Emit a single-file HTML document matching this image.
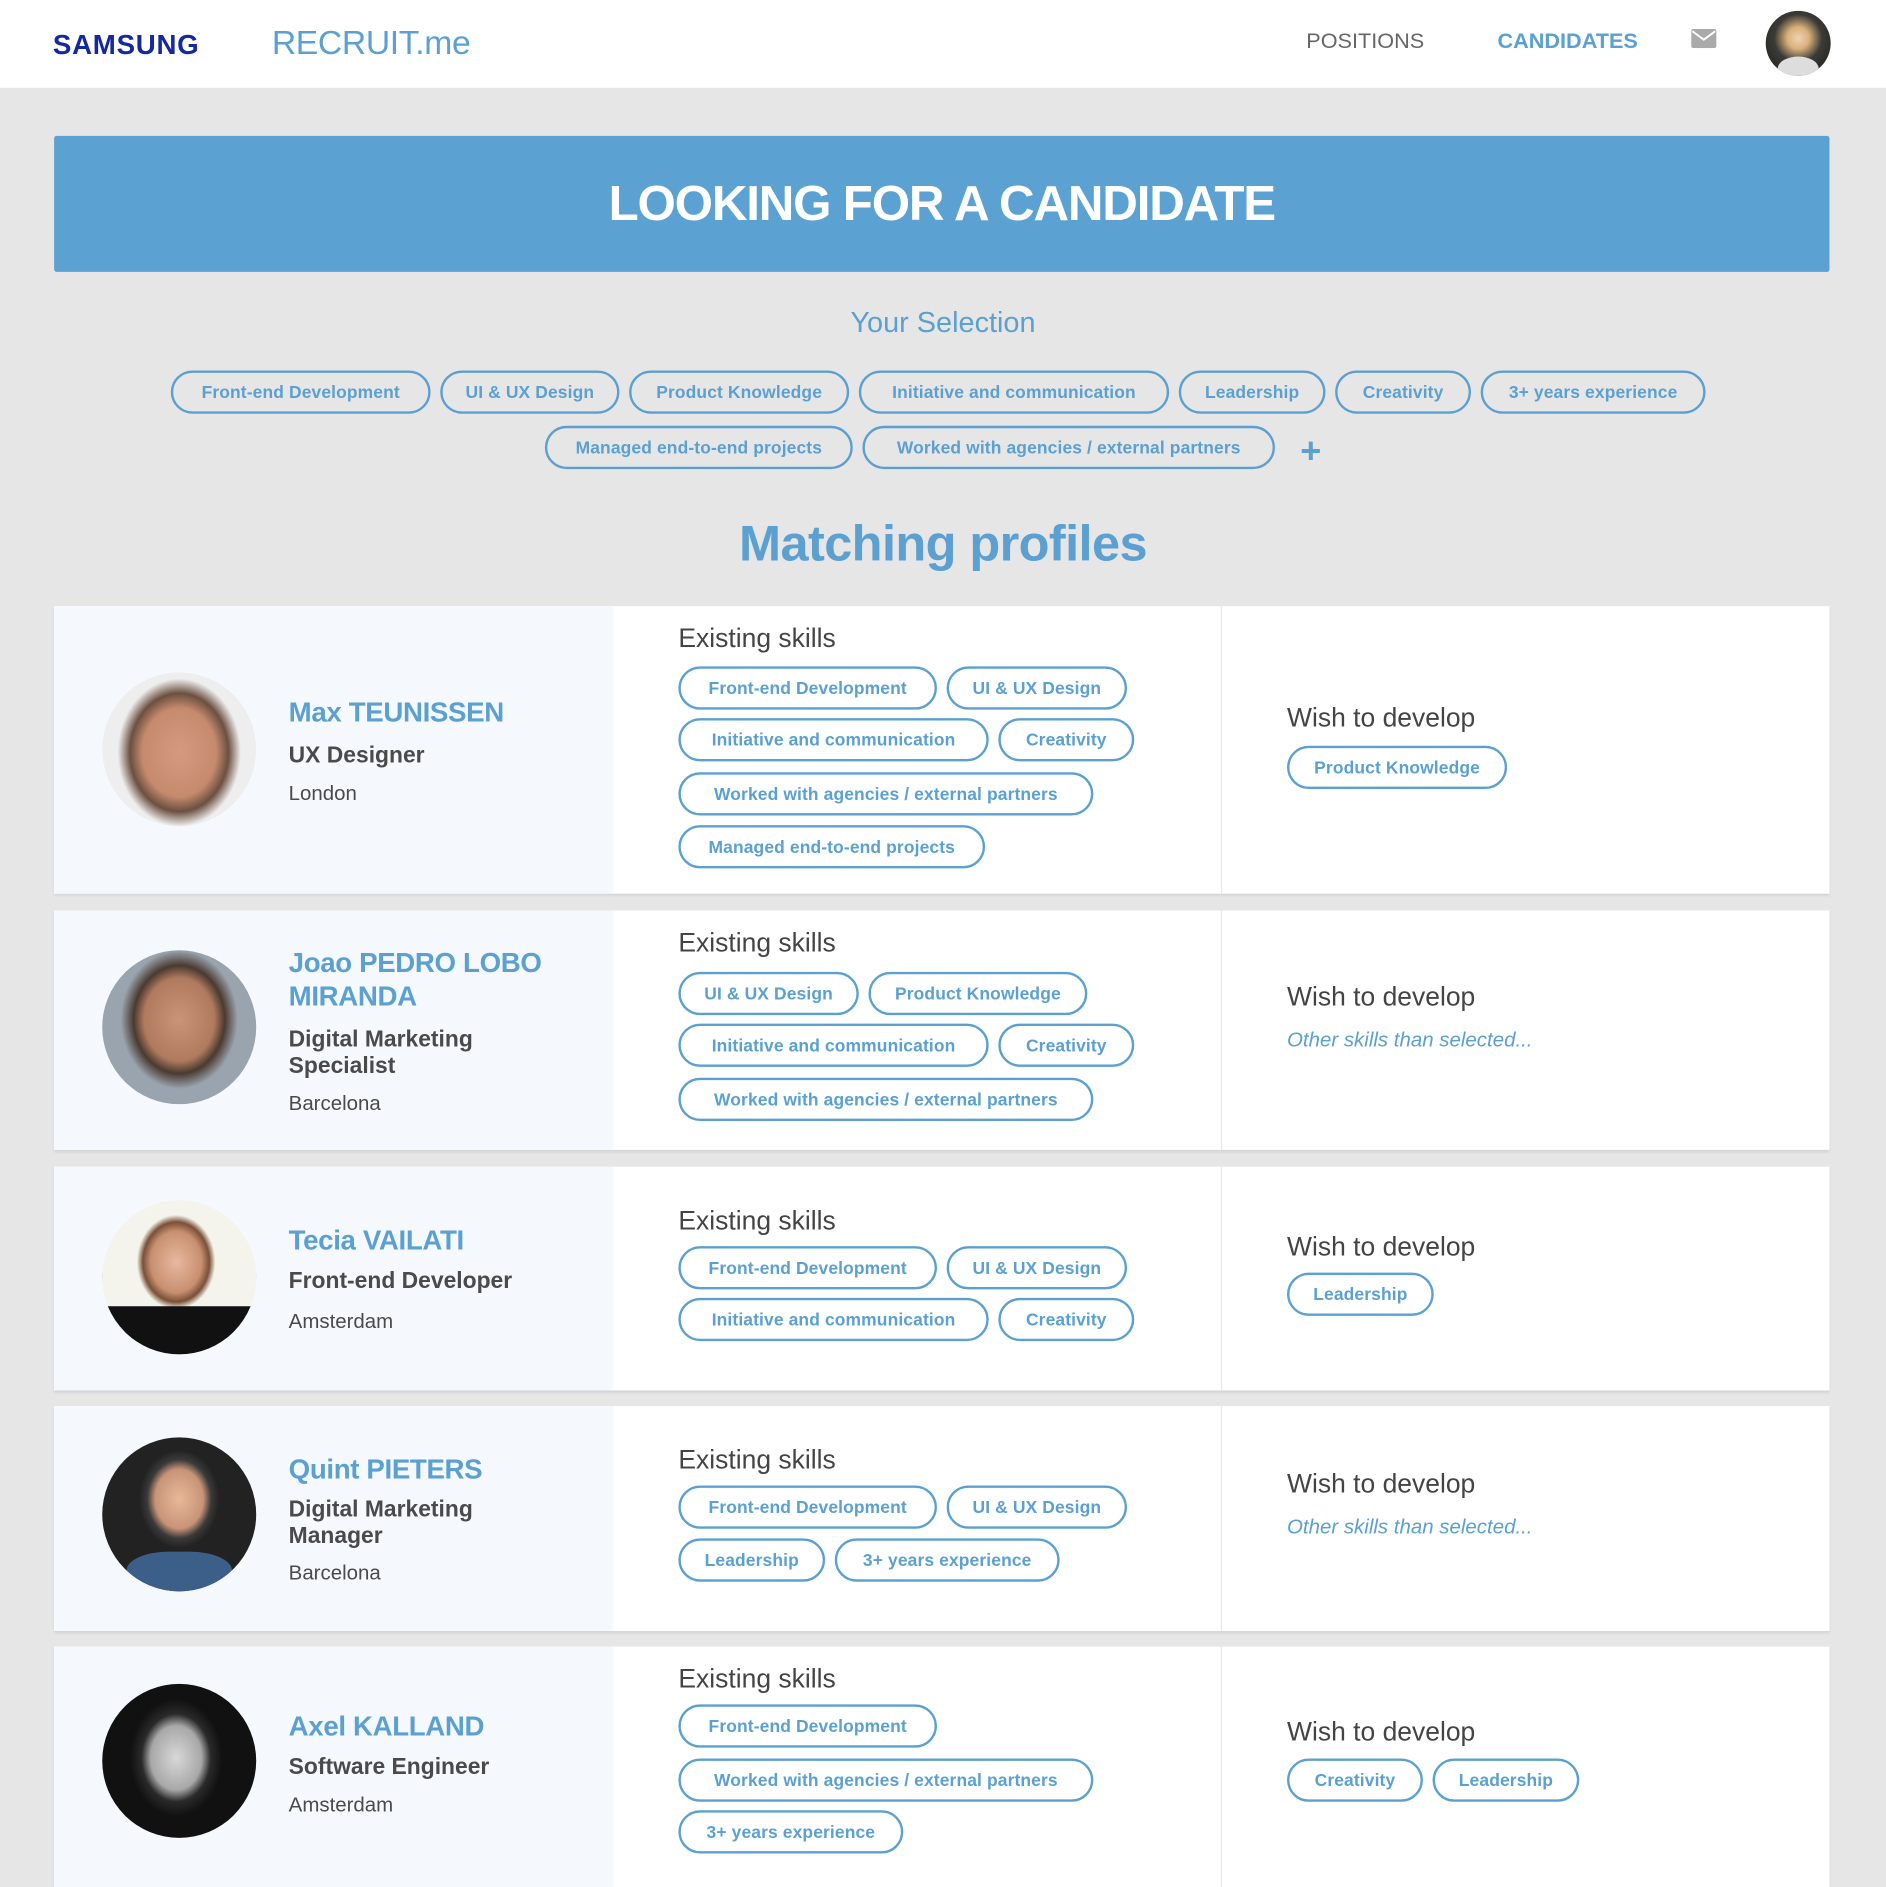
<!DOCTYPE html>
<html><head><meta charset="utf-8"><style>
html,body{margin:0;padding:0;}
body{width:1886px;height:1876px;overflow:hidden;background:#e6e6e6;font-family:"Liberation Sans",sans-serif;}
#w{position:absolute;left:0;top:0;width:1568px;height:1560px;transform:scale(1.20281);transform-origin:0 0;}
.a{position:absolute;white-space:nowrap;}
.c{position:absolute;height:32px;line-height:34px;border:2px solid #5ba0d0;border-radius:18px;color:#5ba0d0;font-weight:bold;font-size:14.5px;text-align:center;white-space:nowrap;letter-spacing:0.1px;}
.card{position:absolute;left:45px;width:1476px;background:#fff;box-shadow:0 2px 2px rgba(0,0,0,0.08);}
.lp{position:absolute;left:0;top:0;bottom:0;width:465px;background:#f5f9fe;}
.div{position:absolute;left:970px;top:0;bottom:0;width:1px;background:#e8e8e8;}
.av{position:absolute;left:40px;width:128px;height:128px;border-radius:50%;overflow:hidden;}
.nm{position:absolute;left:195px;color:#5ba0d0;font-weight:bold;font-size:23px;line-height:28px;letter-spacing:-0.3px;margin-top:2px;}
.tt{position:absolute;left:195px;color:#4a4a4a;font-weight:bold;font-size:19px;line-height:22px;margin-top:2px;}
.ct{position:absolute;left:195px;color:#4a4a4a;font-size:17px;margin-top:2px;}
.h{position:absolute;color:#444;font-size:22px;white-space:nowrap;margin-top:2px;}
.o{position:absolute;left:1025px;color:#5ba0d0;font-style:italic;font-size:17px;white-space:nowrap;margin-top:2px;}
</style></head><body><div id="w">
<div class="a" style="left:0;top:0;width:1568px;height:73px;background:#fff;"></div>
<div class="a" style="left:44px;top:24px;font-size:23px;font-weight:bold;color:#1428a0;letter-spacing:0.6px;">SAMSUNG</div>
<div class="a" style="left:226px;top:20px;font-size:28px;color:#5ba0d0;letter-spacing:-0.3px;">RECRUIT.me</div>
<div class="a" style="left:1086px;top:24px;font-size:18px;color:#666;">POSITIONS</div>
<div class="a" style="left:1245px;top:24px;font-size:18px;color:#5ba0d0;font-weight:bold;">CANDIDATES</div>
<svg class="a" style="left:1406px;top:24px;" width="21" height="16" viewBox="0 0 21 16"><rect x="0" y="0" width="21" height="16" rx="2" fill="#aaa"/><path d="M1 2 L10.5 9 L20 2" stroke="#fff" stroke-width="1.6" fill="none"/></svg>
<div class="a" style="left:1468px;top:9px;width:54px;height:54px;border-radius:50%;background:radial-gradient(circle at 50% 42%,#f0d2b4 0,#d9b07a 22%,#3a3a36 48%,#1a1a1a 100%);overflow:hidden;"><div style="position:absolute;left:10px;top:38px;width:34px;height:20px;border-radius:50%;background:#ddd;"></div></div>
<div class="a" style="left:45px;top:113px;width:1476px;height:113px;background:#5ba2d2;border-radius:2px;"></div>
<div class="a" style="left:45px;top:146px;width:1476px;text-align:center;color:#fff;font-weight:bold;font-size:41px;letter-spacing:-1px;">LOOKING FOR A CANDIDATE</div>
<div class="a" style="left:0;top:255px;width:1568px;text-align:center;color:#5ba0d0;font-size:24px;">Your Selection</div>
<span class="c" style="left:142px;top:308px;width:212px;">Front-end Development</span>
<span class="c" style="left:366px;top:308px;width:145px;">UI &amp; UX Design</span>
<span class="c" style="left:523px;top:308px;width:179px;">Product Knowledge</span>
<span class="c" style="left:714px;top:308px;width:254px;">Initiative and communication</span>
<span class="c" style="left:980px;top:308px;width:118px;">Leadership</span>
<span class="c" style="left:1110px;top:308px;width:109px;">Creativity</span>
<span class="c" style="left:1231px;top:308px;width:183px;">3+ years experience</span>
<span class="c" style="left:453px;top:354px;width:252px;">Managed end-to-end projects</span>
<span class="c" style="left:717px;top:354px;width:339px;">Worked with agencies / external partners</span>
<div class="a" style="left:1081px;top:359px;color:#5ba0d0;font-size:30px;font-weight:bold;">+</div>
<div class="a" style="left:0;top:428px;width:1568px;text-align:center;color:#5ba0d0;font-weight:bold;font-size:42px;letter-spacing:-0.5px;">Matching profiles</div>

<div class="card" style="top:504px;height:239px;">
<div class="lp"></div><div class="div"></div>
<div class="av" style="top:55px;background:radial-gradient(ellipse 40% 48% at 50% 52%,#d49a80 0,#c68a6e 60%,#6b5040 80%,#eee 100%);"></div>
<div class="nm" style="top:72px;">Max TEUNISSEN</div>
<div class="tt" style="top:112px;">UX Designer</div>
<div class="ct" style="top:144px;">London</div>
<div class="h" style="left:519px;top:12px;">Existing skills</div>
<span class="c" style="left:519px;top:50px;width:211px;">Front-end Development</span>
<span class="c" style="left:742px;top:50px;width:146px;">UI &amp; UX Design</span>
<span class="c" style="left:519px;top:93px;width:254px;">Initiative and communication</span>
<span class="c" style="left:785px;top:93px;width:109px;">Creativity</span>
<span class="c" style="left:519px;top:138px;width:341px;">Worked with agencies / external partners</span>
<span class="c" style="left:519px;top:182px;width:251px;">Managed end-to-end projects</span>
<div class="h" style="left:1025px;top:78px;">Wish to develop</div>
<span class="c" style="left:1025px;top:116px;width:179px;">Product Knowledge</span>
</div>
<div class="card" style="top:757px;height:199px;">
<div class="lp"></div><div class="div"></div>
<div class="av" style="top:33px;background:radial-gradient(ellipse 38% 45% at 50% 45%,#c99478 0,#b07a5e 60%,#4a3a30 78%,#9aa4ae 100%);"></div>
<div class="nm" style="top:27px;">Joao PEDRO LOBO<br>MIRANDA</div>
<div class="tt" style="top:95px;">Digital Marketing<br>Specialist</div>
<div class="ct" style="top:149px;">Barcelona</div>
<div class="h" style="left:519px;top:12px;">Existing skills</div>
<span class="c" style="left:519px;top:51px;width:146px;">UI &amp; UX Design</span>
<span class="c" style="left:677px;top:51px;width:178px;">Product Knowledge</span>
<span class="c" style="left:519px;top:94px;width:254px;">Initiative and communication</span>
<span class="c" style="left:785px;top:94px;width:109px;">Creativity</span>
<span class="c" style="left:519px;top:139px;width:341px;">Worked with agencies / external partners</span>
<div class="h" style="left:1025px;top:57px;">Wish to develop</div>
<div class="o" style="top:96px;">Other skills than selected...</div>
</div>
<div class="card" style="top:970px;height:186px;">
<div class="lp"></div><div class="div"></div>
<div class="av" style="top:28px;background:radial-gradient(ellipse 30% 36% at 48% 40%,#e8b8a0 0,#c89070 55%,#7a5038 72%,#f4f4ec 85%),#111;"><div style="position:absolute;left:0;top:88px;width:128px;height:40px;background:#111;"></div></div>
<div class="nm" style="top:45px;">Tecia VAILATI</div>
<div class="tt" style="top:83px;">Front-end Developer</div>
<div class="ct" style="top:117px;">Amsterdam</div>
<div class="h" style="left:519px;top:30px;">Existing skills</div>
<span class="c" style="left:519px;top:66px;width:211px;">Front-end Development</span>
<span class="c" style="left:742px;top:66px;width:146px;">UI &amp; UX Design</span>
<span class="c" style="left:519px;top:109px;width:254px;">Initiative and communication</span>
<span class="c" style="left:785px;top:109px;width:109px;">Creativity</span>
<div class="h" style="left:1025px;top:52px;">Wish to develop</div>
<span class="c" style="left:1025px;top:88px;width:118px;">Leadership</span>
</div>
<div class="card" style="top:1169px;height:187px;">
<div class="lp"></div><div class="div"></div>
<div class="av" style="top:26px;background:radial-gradient(ellipse 26% 32% at 50% 40%,#e8b898 0,#c89478 60%,#3a3a3a 80%,#222 100%);"><div style="position:absolute;left:20px;top:95px;width:88px;height:40px;border-radius:40% 40% 0 0;background:#3c5f8a;"></div></div>
<div class="nm" style="top:36px;">Quint PIETERS</div>
<div class="tt" style="top:74px;">Digital Marketing<br>Manager</div>
<div class="ct" style="top:127px;">Barcelona</div>
<div class="h" style="left:519px;top:30px;">Existing skills</div>
<span class="c" style="left:519px;top:66px;width:211px;">Front-end Development</span>
<span class="c" style="left:742px;top:66px;width:146px;">UI &amp; UX Design</span>
<span class="c" style="left:519px;top:110px;width:118px;">Leadership</span>
<span class="c" style="left:649px;top:110px;width:183px;">3+ years experience</span>
<div class="h" style="left:1025px;top:50px;">Wish to develop</div>
<div class="o" style="top:89px;">Other skills than selected...</div>
</div>
<div class="card" style="top:1369px;height:200px;">
<div class="lp"></div><div class="div"></div>
<div class="av" style="top:31px;background:radial-gradient(ellipse 30% 38% at 48% 48%,#d8d8d8 0,#a8a8a8 55%,#2a2a2a 75%,#111 100%);"></div>
<div class="nm" style="top:50px;">Axel KALLAND</div>
<div class="tt" style="top:88px;">Software Engineer</div>
<div class="ct" style="top:120px;">Amsterdam</div>
<div class="h" style="left:519px;top:12px;">Existing skills</div>
<span class="c" style="left:519px;top:48px;width:211px;">Front-end Development</span>
<span class="c" style="left:519px;top:93px;width:341px;">Worked with agencies / external partners</span>
<span class="c" style="left:519px;top:136px;width:183px;">3+ years experience</span>
<div class="h" style="left:1025px;top:56px;">Wish to develop</div>
<span class="c" style="left:1025px;top:93px;width:109px;">Creativity</span>
<span class="c" style="left:1146px;top:93px;width:118px;">Leadership</span>
</div>
</div></body></html>
